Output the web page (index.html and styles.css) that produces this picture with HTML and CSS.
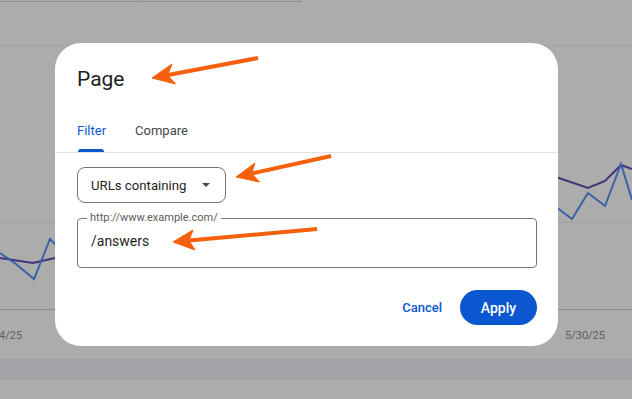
FILE: index.html
```html
<!DOCTYPE html>
<html lang="en">
  <head>
    <meta charset="UTF-8" />
    <meta name="viewport" content="width=device-width, initial-scale=1.0" />
    <title>Page filter</title>
    <link rel="stylesheet" href="styles.css">
  </head>
  <body>
    <div class="backdrop">
      <div class="top-strip">
        <div class="strip-cell first"></div>
        <div class="strip-cell second"></div>
      </div>

      <svg class="chart" width="632" height="310" viewBox="0 0 632 310">
        <line x1="0" y1="43.5" x2="632" y2="43.5" stroke="#a0a0a0" />
        <line x1="0" y1="220.5" x2="632" y2="220.5" stroke="#a0a0a0" />
        <line x1="0" y1="307.5" x2="632" y2="307.5" stroke="#8c8c8c" />
        <polyline points="0,256 33,261 55,256" fill="none" stroke="#45307a" stroke-width="2" />
        <polyline points="0,251 16,262 34,277 50,237 56,243" fill="none" stroke="#3a62a6" stroke-width="2" />
        <polyline points="556,175 588,186 605,179 621,163 632,167" fill="none" stroke="#45307a" stroke-width="2" />
        <polyline points="556,205 572,217 588,191 605,204 621,162 632,198" fill="none" stroke="#3a62a6" stroke-width="2" />
      </svg>

      <div class="axis-labels">
        <span>4/25</span>
        <span>5/30/25</span>
      </div>
      <div class="band"></div>
    </div>

    <div class="dialog">
      <h2 class="dialog-title">Page</h2>

      <div class="tabs">
        <div class="tab active">Filter</div>
        <div class="tab">Compare</div>
      </div>

      <div class="dialog-body">
        <div class="select-box">
          <span>URLs containing</span>
          <span class="caret"></span>
        </div>

        <fieldset class="text-field">
          <legend>http://www.example.com/</legend>
          <div class="field-value">/answers</div>
        </fieldset>

        <div class="actions">
          <button class="btn-text">Cancel</button>
          <button class="btn-apply">Apply</button>
        </div>
      </div>
    </div>

    <svg class="arrows" width="632" height="399" viewBox="0 0 632 399">
      <g fill="#f5600d" stroke="#f5600d">
        <line x1="258" y1="58" x2="168" y2="75" stroke-width="4" />
        <polygon points="152,78 172,64 167.7,75 175.5,84" stroke-width="1" />
        <line x1="331" y1="156" x2="252" y2="173.5" stroke-width="4" />
        <polygon points="236,177 255,163 251.6,173.5 259.5,182" stroke-width="1" />
        <line x1="317" y1="229" x2="189" y2="240.6" stroke-width="4" />
        <polygon points="173,242 193,230 189,240.6 195,250" stroke-width="1" />
      </g>
    </svg>
  </body>
</html>
```

FILE: styles.css
```css
* {
  margin: 0;
  padding: 0;
  box-sizing: border-box;
  font-family: "Roboto", "Liberation Sans", sans-serif;
}
body {
  width: 632px;
  height: 399px;
  background-color: #acacac;
  overflow: hidden;
  position: relative;
}
.backdrop {
  display: flex;
  flex-direction: column;
}
.top-strip {
  display: flex;
  height: 2px;
}
.strip-cell {
  border-bottom: 1px solid #8e8e8e;
  border-right: 1px solid #8e8e8e;
}
.strip-cell.first {
  width: 139px;
}
.strip-cell.second {
  width: 162px;
}
.chart {
  display: block;
}
.axis-labels {
  height: 47px;
  display: flex;
  justify-content: space-between;
  align-items: center;
  padding: 0 27px 0 0;
  margin-left: -1px;
  font-size: 11px;
  color: #5e5e5e;
}
.band {
  height: 21px;
  background: #a3a4a7;
}

/* dialog */
.dialog {
  position: absolute;
  left: 55px;
  top: 43px;
  width: 503px;
  height: 303px;
  background: #fff;
  border-radius: 26px;
}
.dialog-title {
  font-size: 21px;
  font-weight: 400;
  color: #1f1f1f;
  padding: 22px 22px 0;
  line-height: 28px;
}
.tabs {
  display: flex;
  gap: 29px;
  padding: 0 22px;
  margin-top: 21px;
  border-bottom: 1px solid #e2e2e2;
}
.tab {
  font-size: 13px;
  color: #444746;
  height: 38px;
  line-height: 17px;
  padding-top: 8px;
  position: relative;
}
.tab.active {
  color: #0b57d0;
}
.tab.active::after {
  content: "";
  position: absolute;
  left: 1px;
  right: 2px;
  bottom: 0;
  height: 3px;
  background: #0b57d0;
  border-radius: 3px 3px 0 0;
}
.dialog-body {
  padding: 14px 21px 22px 22px;
}
.select-box {
  width: 149px;
  height: 36px;
  border: 1px solid #747775;
  border-radius: 8px;
  display: flex;
  align-items: center;
  justify-content: space-between;
  padding: 0 15px 0 13px;
  font-size: 13.2px;
  color: #1f1f1f;
}
.caret {
  width: 0;
  height: 0;
  border-left: 4px solid transparent;
  border-right: 4px solid transparent;
  border-top: 4px solid #444746;
}
.text-field {
  margin-top: 9px;
  height: 56px;
  border: 1px solid #747775;
  border-radius: 4px;
  padding: 0 13px;
}
.text-field legend {
  font-size: 11px;
  color: #5b5b5b;
  padding: 0 3px;
  margin-left: -4px;
  line-height: 12px;
}
.field-value {
  font-size: 14px;
  color: #1f1f1f;
  padding-top: 9px;
}
.actions {
  display: flex;
  justify-content: flex-end;
  align-items: center;
  gap: 6px;
  margin-top: 22px;
}
.btn-text {
  background: none;
  border: none;
  font-size: 13px;
  font-weight: 500;
  color: #0b57d0;
  padding: 8px 12px;
}
.btn-apply {
  width: 77px;
  height: 35px;
  border: none;
  border-radius: 18px;
  background: #0b57d0;
  color: #fff;
  font-size: 14px;
  font-weight: 500;
}
.arrows {
  position: absolute;
  left: 0;
  top: 0;
  pointer-events: none;
}
```
